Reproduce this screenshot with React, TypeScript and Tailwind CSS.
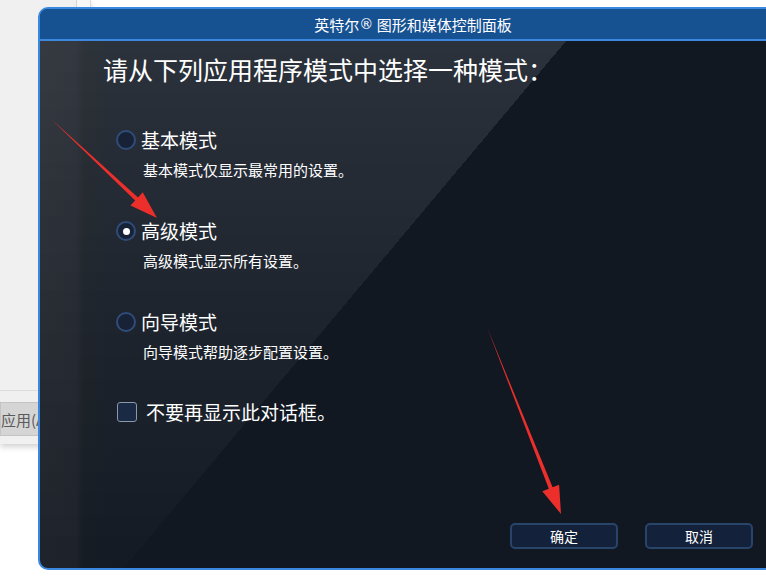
import type { ReactNode } from 'react';

type ModeOption = {
  label: string;
  desc: string;
  checked?: boolean;
};

const modes: ModeOption[] = [
  { label: '基本模式', desc: '基本模式仅显示最常用的设置。' },
  { label: '高级模式', desc: '高级模式显示所有设置。', checked: true },
  { label: '向导模式', desc: '向导模式帮助逐步配置设置。' },
];

function Radio({ checked }: { checked?: boolean }) {
  return (
    <span className="flex h-[20px] w-[20px] shrink-0 items-center justify-center rounded-full border-2 border-[#2f4c7a] bg-[#172236]">
      {checked && <span className="h-[7px] w-[7px] rounded-full bg-white" />}
    </span>
  );
}

function DialogButton({ children }: { children: ReactNode }) {
  return (
    <button className="flex h-[26px] w-[108px] items-center justify-center rounded-[5px] border-2 border-[#28446a] bg-[#13213a] text-[14px] leading-none text-white">
      {children}
    </button>
  );
}

export default function App() {
  return (
    <div className="relative h-[577px] w-[766px] overflow-hidden bg-white font-['Noto_Sans_CJK_SC','Noto_Sans',sans-serif]">
      {/* window behind the dialog */}
      <div className="absolute left-0 top-0 flex h-[444px] w-[91px] flex-col border-r border-[#dadada] bg-[#f0f0f0] shadow-[0_3px_6px_rgba(0,0,0,0.18)]">
        <div className="flex flex-1">
          <div className="w-[77px] border-r border-[#d4d4d4]" />
          <div className="flex-1 bg-[#f7f7f7]" />
        </div>
        <div className="h-[54px] border-t border-[#dcdcdc] pt-[11px]">
          <div className="flex h-[34px] w-[80px] items-center border border-[#c4c4c4] bg-[#d5d5d5] text-[15px] leading-none text-[#5a5a5a]">
            应用(A)
          </div>
        </div>
      </div>

      {/* dialog */}
      <div className="absolute left-[38px] top-[7px] flex h-[563px] w-[750px] flex-col overflow-hidden rounded-[10px] border-2 border-[#3a87df] bg-[linear-gradient(to_right,#1c2129_0px,#1a1f28_36px,#131920_44px,#111822_70px)]">
        {/* glass gloss */}
        <div className="pointer-events-none absolute inset-0 bg-[linear-gradient(130deg,rgba(255,255,255,0.12)_45.5%,transparent_45.5%)] [mask-image:linear-gradient(to_bottom,#000_0%,rgba(0,0,0,0.5)_50%,rgba(0,0,0,0.1)_100%)]" />

        <div className="relative flex h-[32px] shrink-0 items-center justify-center border-b-2 border-[#3b88de] bg-[#165192] text-[15px] leading-none text-white">
          英特尔<span className="font-['DejaVu_Sans',sans-serif] text-[14px]">®</span>&nbsp;图形和媒体控制面板
        </div>

        <div className="relative flex flex-1 flex-col">
          <h1 className="ml-[63px] mt-[16px] text-[25px] font-normal leading-[25px] text-white">
            请从下列应用程序模式中选择一种模式：
          </h1>

          <div className="ml-[76px] mt-[48px] flex flex-col gap-[44px]">
            {modes.map((m) => (
              <div key={m.label} className="flex flex-col">
                <label className="flex h-[20px] items-center gap-[5px]">
                  <Radio checked={m.checked} />
                  <span className="text-[19px] leading-[20px] text-white">{m.label}</span>
                </label>
                <div className="ml-[27px] mt-[12px] text-[15px] leading-[15px] text-white">{m.desc}</div>
              </div>
            ))}
          </div>

          <label className="ml-[77px] mt-[43px] flex h-[20px] items-center gap-[9px]">
            <span className="h-[20px] w-[20px] rounded-[3px] border-[1.5px] border-[#8c97a7] bg-[#1a2944]" />
            <span className="text-[19px] leading-[20px] text-white">不要再显示此对话框。</span>
          </label>

          <div className="mb-[19px] mt-auto flex justify-end gap-[27px] pr-[33px]">
            <DialogButton>确定</DialogButton>
            <DialogButton>取消</DialogButton>
          </div>
        </div>
      </div>

      {/* red annotation arrows */}
      <svg className="pointer-events-none absolute inset-0" width="766" height="577" viewBox="0 0 766 577">
        <polygon
          fill="#ec2f2b"
          points="50,118 138,197.4 142.7,192.3 157,218 130.5,205.5 135.2,200.4"
        />
        <polygon
          fill="#ec2f2b"
          points="487,327 552.6,487.3 559.1,484.7 561,514 542.3,491.3 548.8,488.7"
        />
      </svg>
    </div>
  );
}
